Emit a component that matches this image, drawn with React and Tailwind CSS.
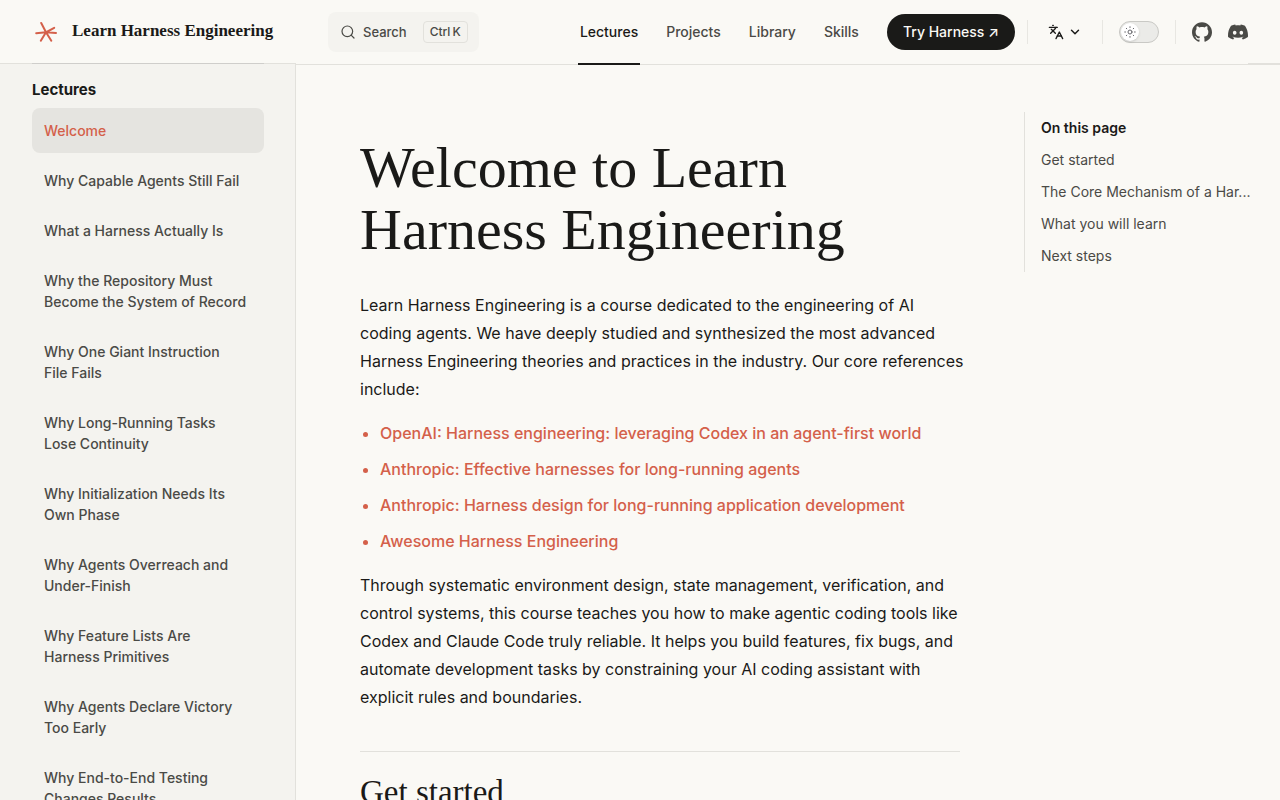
import { SiGithub, SiDiscord } from "react-icons/si";
import { Search, ChevronDown, Languages } from "lucide-react";

const lectures = [
  "Welcome",
  "Why Capable Agents Still Fail",
  "What a Harness Actually Is",
  "Why the Repository Must Become the System of Record",
  "Why One Giant Instruction\nFile Fails",
  "Why Long-Running Tasks\nLose Continuity",
  "Why Initialization Needs Its Own Phase",
  "Why Agents Overreach and Under-Finish",
  "Why Feature Lists Are\nHarness Primitives",
  "Why Agents Declare Victory Too Early",
  "Why End-to-End Testing Changes Results",
];

const references = [
  "OpenAI: Harness engineering: leveraging Codex in an agent-first world",
  "Anthropic: Effective harnesses for long-running agents",
  "Anthropic: Harness design for long-running application development",
  "Awesome Harness Engineering",
];

const outline = [
  "Get started",
  "The Core Mechanism of a Har...",
  "What you will learn",
  "Next steps",
];

const serif = "font-['Liberation_Serif',serif]";

function Logo() {
  return (
    <svg viewBox="0 0 28 28" className="size-7" fill="none" stroke="#d4604a" strokeWidth="2" strokeLinecap="round" aria-hidden="true">
      <path d="M9.2 5 14 14.3 19.3 22.7M4.2 15.2 14 14.3 24 15M22.2 9.8 14 14.3 8.8 22.7" />
    </svg>
  );
}

function SunIcon() {
  return (
    <svg viewBox="0 0 24 24" className="size-3" fill="none" stroke="#67676c" strokeWidth="2" strokeLinecap="round" aria-hidden="true">
      <circle cx="12" cy="12" r="4" />
      <path d="M12 1.5v1.5M12 21v1.5M1.5 12H3M21 12h1.5M4.6 4.6l1 1M18.4 18.4l1 1M4.6 19.4l1-1M18.4 5.6l1-1" />
    </svg>
  );
}

function Divider() {
  return <span className="h-6 w-px bg-[#e8e7e2]" />;
}

function Header() {
  return (
    <header className="flex h-16 items-center">
      <div className="flex h-full w-[296px] shrink-0 items-center pl-8">
        <a href="#" className={`flex items-center gap-3 text-[17px] leading-7 font-bold ${serif}`}>
          <Logo />
          <span className="pb-[2px]">Learn Harness Engineering</span>
        </a>
      </div>
      <div className="box-content flex h-full min-w-0 flex-1 items-center border-b border-[#e2e1dc] pl-8">
        <button type="button" className="flex h-10 items-center rounded-lg bg-[#f4f3ef] pr-[11px] pl-3 text-[13px] font-medium text-[#4a4a46]">
          <Search className="mr-[7px] size-4" strokeWidth={1.8} />
          <span className="pt-[2px]">Search</span>
          <kbd className="ml-4 flex gap-[2px] rounded border border-[#e2e1dc] px-[6px] font-[Inter,sans-serif] text-xs leading-5 font-medium">
            <span>Ctrl</span>
            <span>K</span>
          </kbd>
        </button>
        <nav className="ml-auto flex h-full text-sm font-medium text-[#4a4a46]">
          <a href="#" className="relative mr-3 flex items-center px-[2px] text-[#1a1a18]">
            Lectures
            <span className="absolute inset-x-0 -bottom-px h-[2px] bg-[#1a1a18]" />
          </a>
          <a href="#" className="flex items-center px-[14px]">Projects</a>
          <a href="#" className="flex items-center px-[14px]">Library</a>
          <a href="#" className="flex items-center px-[14px]">Skills</a>
        </nav>
        <a href="#" className="ml-[14px] flex h-9 items-center rounded-full bg-[#1a1a18] px-4 text-sm font-medium whitespace-nowrap text-[#faf9f5]">
          Try Harness ↗
        </a>
        <div className="ml-3 flex items-center">
          <Divider />
          <button type="button" aria-label="Change language" className="mx-5 flex items-center gap-1 text-[#1a1a18]">
            <Languages className="size-4" strokeWidth={2} />
            <ChevronDown className="size-[14px]" strokeWidth={2.5} />
          </button>
          <Divider />
          <button type="button" role="switch" aria-checked="false" aria-label="Switch to dark theme" className="mx-4 flex h-[22px] w-10 items-center rounded-full border border-[#c9c9c5] bg-[#ebebe8] p-px">
            <span className="flex size-[18px] items-center justify-center rounded-full bg-white shadow-sm">
              <SunIcon />
            </span>
          </button>
          <Divider />
          <a href="#" aria-label="GitHub" className="ml-4 text-[#4a4a46]"><SiGithub className="size-5" /></a>
          <a href="#" aria-label="Discord" className="ml-4 text-[#4a4a46]"><SiDiscord className="size-5" /></a>
        </div>
        <span className="h-full w-8 border-b border-[#e2e1dc]" />
      </div>
    </header>
  );
}

function Sidebar() {
  return (
    <aside className="w-[296px] shrink-0 border-t border-r border-[#e2e1dc] bg-[#f4f3ef] pr-[31px] pl-8">
      <div className="-mt-px border-t border-[#cfcecb] pt-3">
        <h2 className="pt-[2px] text-[15px] leading-6 font-bold">Lectures</h2>
      </div>
      <ul className="mt-[6px] flex flex-col gap-[5px] text-sm leading-[21px] font-medium text-[#4a4a46]">
        {lectures.map((title, i) => (
          <li key={title}>
            <a href="#" className={i === 0 ? "block rounded-lg bg-[#e5e4e0] p-3 text-[#d4604a]" : "block p-3 whitespace-pre-line"}>
              {title}
            </a>
          </li>
        ))}
      </ul>
    </aside>
  );
}

export default function App() {
  return (
    <div className="flex h-screen flex-col overflow-hidden bg-[#faf9f5] font-[Inter,sans-serif] text-[#1a1a18]">
      <Header />
      <div className="-mt-px flex min-h-0 flex-1">
        <Sidebar />
        <div className="flex min-w-0 flex-1 justify-between overflow-hidden pr-8 pl-16">
          <main className="w-[600px] shrink-0 pt-[74px] text-base leading-7">
            <h1 className={`text-[58px] leading-[62px] ${serif}`}>Welcome to Learn Harness Engineering</h1>
            <p className="mt-[30px] -mr-2">
              Learn Harness Engineering is a course dedicated to the engineering of AI coding agents. We have deeply studied and synthesized the most advanced Harness Engineering theories and practices in the industry. Our core references include:
            </p>
            <ul className="my-4 flex list-disc flex-col gap-2 pl-5 font-medium text-[#d4604a]">
              {references.map((r) => (
                <li key={r}><a href="#">{r}</a></li>
              ))}
            </ul>
            <p>
              Through systematic environment design, state management, verification, and control systems, this course teaches you how to make agentic coding tools like Codex and Claude Code truly reliable. It helps you build features, fix bugs, and automate development tasks by constraining your AI coding assistant with explicit rules and boundaries.
            </p>
            <h2 className={`mt-10 border-t border-[#e2e1dc] pt-[22px] text-[33px] leading-9 ${serif}`}>Get started</h2>
          </main>
          <aside className="mt-[49px] h-40 w-56 shrink-0 border-l border-[#e2e1dc] pl-4 text-sm leading-8">
            <h2 className="font-semibold">On this page</h2>
            <ul className="text-[#4a4a46]">
              {outline.map((o) => (
                <li key={o}><a href="#" className="block whitespace-nowrap">{o}</a></li>
              ))}
            </ul>
          </aside>
        </div>
      </div>
    </div>
  );
}
